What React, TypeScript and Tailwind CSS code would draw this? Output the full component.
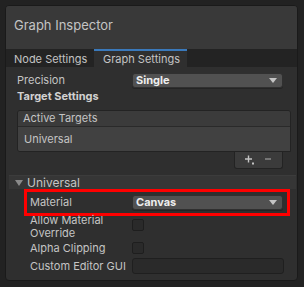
import React from "react";

const Arrow = () => (
  <svg width="8" height="5" viewBox="0 0 8 5" className="shrink-0">
    <path d="M0 0 L8 0 L4 5 Z" fill="#c4c4c4" />
  </svg>
);

const Dropdown = ({ value }: { value: string }) => (
  <div className="w-[151px] h-[15px] bg-[#515151] rounded-[3px] border border-[#303030] flex items-center justify-between pl-[3px] pr-[5px] shadow-[0_1px_0_#242424]">
    <span className="text-[11px] font-bold text-[#eeeeee] leading-none">{value}</span>
    <Arrow />
  </div>
);

const Checkbox = () => (
  <div className="w-[12px] h-[12px] bg-[#2a2a2a] border border-[#1e1e1e] rounded-[2px]" />
);

export default function App() {
  return (
    <div
      className="w-[304px] h-[287px] bg-[#222222] pt-[5px] pl-[5px]"
      style={{ fontFamily: "Inter, 'Noto Sans', sans-serif" }}
    >
      <div className="w-[293px] h-[276px] border border-[#1a1a1a] rounded-[4px] overflow-hidden flex flex-col bg-[#2f2f2f]">
        {/* Header */}
        <div className="h-[43px] bg-[#393939] pl-[8px] pt-[6px] shrink-0">
          <span className="text-[13px] text-[#c4c4c4] leading-[16px]">Graph Inspector</span>
        </div>
        {/* Tabs */}
        <div className="h-[18px] bg-[#232323] flex shrink-0 text-[11px] text-[#c4c4c4] leading-none">
          <div className="w-[88px] flex items-center pl-[8px] pt-[2px]">Node Settings</div>
          <div className="w-[93px] bg-[#2f2f2f] border-t-2 border-[#3a79bb] flex items-center pl-[9px]">
            Graph Settings
          </div>
        </div>
        {/* Content */}
        <div className="flex flex-col text-[11px] text-[#c4c4c4]">
          <div className="flex items-center h-[15px] mt-[6px] pl-[11px]">
            <span className="w-[115px]">Precision</span>
            <Dropdown value="Single" />
          </div>
          <div className="pl-[11px] mt-[1px] h-[14px] leading-[14px] font-bold text-[#d2d2d2]">Target Settings</div>
          {/* List */}
          <div className="ml-[11px] mt-[7px] w-[274px] flex flex-col">
            <div className="rounded-t-[3px] rounded-bl-[3px] border border-[#232323] overflow-hidden">
              <div className="h-[16px] bg-[#3b3b3b] border-b border-[#2a2a2a] flex items-center pl-[5px] leading-none">
                Active Targets
              </div>
              <div className="h-[24px] bg-[#414141] flex items-center pl-[6px] leading-none">Universal</div>
            </div>
            <div className="self-end mr-[8px] w-[49px] h-[17px] bg-[#3b3b3b] border border-t-0 border-[#232323] rounded-b-[3px] flex items-center pl-[10px] gap-[10px]">
              <svg width="10" height="10" viewBox="0 0 10 10">
                <path d="M3.5 0.5 V7.5 M0 4 H7" stroke="#c4c4c4" strokeWidth="1.4" />
                <rect x="7" y="7.5" width="2" height="2" fill="#c4c4c4" />
              </svg>
              <svg width="7" height="10" viewBox="0 0 7 10">
                <path d="M0 4 H6" stroke="#8a8a8a" strokeWidth="1.4" />
              </svg>
            </div>
          </div>
          {/* Foldout */}
          <div className="ml-[3px] mr-[1px] mt-[6px] h-[14px] bg-[#363636] border-t border-[#3c3c3c] flex items-center pl-[6px] gap-[4px] leading-none">
            <svg width="8" height="6" viewBox="0 0 8 6">
              <path d="M0 0 L8 0 L4 6 Z" fill="#8a8a8a" />
            </svg>
            <span className="text-[#c4c4c4] text-[12px]">Universal</span>
          </div>
          {/* Red box */}
          <div className="ml-[18px] w-[266px] h-[27px] border-[3px] border-[#ff0000] flex items-center">
            <span className="w-[105px] pl-[3px]">Material</span>
            <Dropdown value="Canvas" />
          </div>
          <div className="flex pl-[24px] mt-[-2px]">
            <span className="w-[102px] leading-[13px]">
              Allow Material
              <br />
              Override
            </span>
            <div className="pt-[5px]">
              <Checkbox />
            </div>
          </div>
          <div className="flex items-center pl-[24px] mt-[1px] h-[14px] leading-[14px]">
            <span className="w-[102px]">Alpha Clipping</span>
            <Checkbox />
          </div>
          <div className="flex items-center pl-[24px] mt-[3px]">
            <span className="w-[102px] whitespace-nowrap">Custom Editor GUI</span>
            <div className="w-[152px] h-[16px] bg-[#2a2a2a] border border-[#1f1f1f] rounded-[3px]" />
          </div>
        </div>
      </div>
    </div>
  );
}
